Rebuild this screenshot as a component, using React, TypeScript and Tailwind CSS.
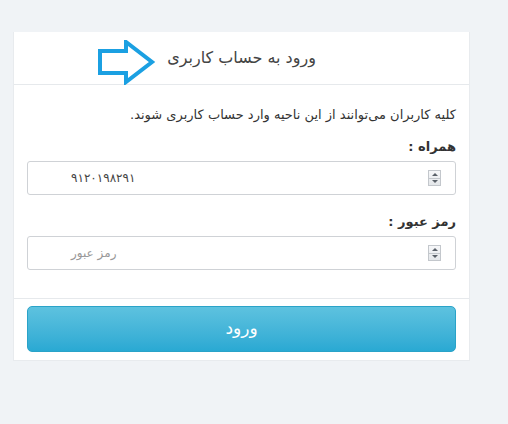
import React from "react";

function Spinner() {
  return (
    <div className="flex flex-col w-[13px] h-[16px] border border-[#c3c7cc] overflow-hidden bg-gradient-to-b from-[#f6f7f9] to-[#e4e7ea]">
      <div className="flex-1 flex items-center justify-center border-b border-[#c3c7cc]">
        <svg width="6" height="3" viewBox="0 0 6 3"><path d="M0 3 L3 0 L6 3 Z" fill="#5a6169" /></svg>
      </div>
      <div className="flex-1 flex items-center justify-center">
        <svg width="6" height="3" viewBox="0 0 6 3"><path d="M0 0 L3 3 L6 0 Z" fill="#5a6169" /></svg>
      </div>
    </div>
  );
}

export default function App() {
  const font = { fontFamily: '"DejaVu Sans", "Noto Sans", sans-serif' };
  return (
    <div className="w-[508px] h-[424px] bg-[#f0f3f6] pt-[32px] pl-[13px]" style={font}>
      <div dir="rtl" className="w-[457px] bg-white border border-[#e8ebee] border-t-0">
        <div className="relative h-[53px] border-b border-[#e6e9ec] flex items-center justify-center">
          <span className="text-[16px] text-[#444]">ورود به حساب کاربری</span>
          <svg className="absolute left-[84px] top-[8px]" width="58" height="45" viewBox="0 0 58 45">
            <path d="M2 11 L28 11 L28 2 L54 22 L28 42 L28 33 L2 33 Z" fill="none" stroke="#1ba0e2" strokeWidth="4" strokeLinejoin="miter" />
          </svg>
        </div>
        <div className="px-[13px] pt-[20px] pb-[28px]">
          <p className="text-[13px] text-[#333] leading-[20px]">کلیه کاربران می‌توانند از این ناحیه وارد حساب کاربری شوند.</p>
          <label className="block mt-[12px] text-[13px] text-[#333] font-semibold leading-[20px]">همراه :</label>
          <div className="mt-[4px] h-[34px] border border-[#cfd2d6] rounded-[3px] flex items-center px-[14px]">
            <Spinner />
            <span className="mr-auto ml-[29px] text-[12px] text-[#444]">۹۱۲۰۱۹۸۲۹۱</span>
          </div>
          <label className="block mt-[17px] text-[13px] text-[#333] font-semibold leading-[20px]">رمز عبور :</label>
          <div className="mt-[4px] h-[34px] border border-[#cfd2d6] rounded-[3px] flex items-center px-[14px]">
            <Spinner />
            <span className="mr-auto ml-[29px] text-[12px] text-[#999]">رمز عبور</span>
          </div>
        </div>
        <div className="border-t border-[#e6e9ec] px-[13px] pt-[7px] pb-[8px]">
          <button className="w-full h-[46px] rounded-[5px] border border-[#2aa3c8] bg-gradient-to-b from-[#5dc2df] to-[#29a9d3] text-white text-[17px]">ورود</button>
        </div>
      </div>
    </div>
  );
}
